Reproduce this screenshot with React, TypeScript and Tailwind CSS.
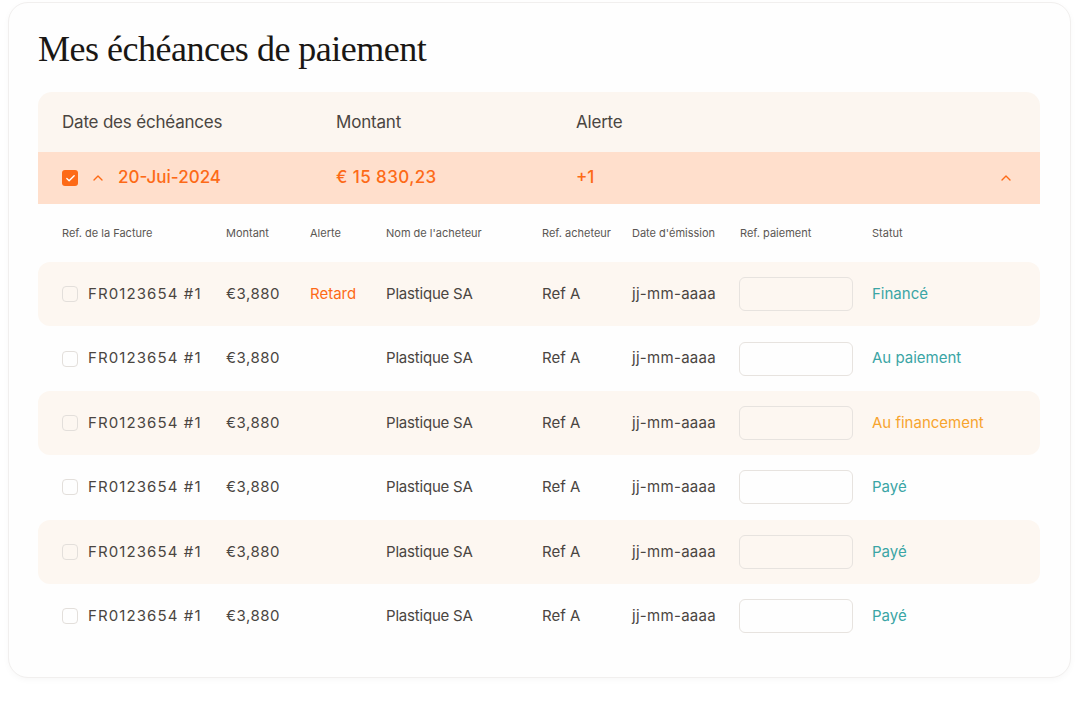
import { Check, ChevronUp } from "lucide-react";

type Row = {
  ref: string;
  amount: string;
  alert?: string;
  buyer: string;
  buyerRef: string;
  date: string;
  status: string;
  statusClass: string;
};

const ROWS: Row[] = [
  { ref: "FR0123654 #1", amount: "€3,880", alert: "Retard", buyer: "Plastique SA", buyerRef: "Ref A", date: "jj-mm-aaaa", status: "Financé", statusClass: "text-[#3aa5a5]" },
  { ref: "FR0123654 #1", amount: "€3,880", buyer: "Plastique SA", buyerRef: "Ref A", date: "jj-mm-aaaa", status: "Au paiement", statusClass: "text-[#3aa5a5]" },
  { ref: "FR0123654 #1", amount: "€3,880", buyer: "Plastique SA", buyerRef: "Ref A", date: "jj-mm-aaaa", status: "Au financement", statusClass: "text-[#f7a42e]" },
  { ref: "FR0123654 #1", amount: "€3,880", buyer: "Plastique SA", buyerRef: "Ref A", date: "jj-mm-aaaa", status: "Payé", statusClass: "text-[#3aa5a5]" },
  { ref: "FR0123654 #1", amount: "€3,880", buyer: "Plastique SA", buyerRef: "Ref A", date: "jj-mm-aaaa", status: "Payé", statusClass: "text-[#3aa5a5]" },
  { ref: "FR0123654 #1", amount: "€3,880", buyer: "Plastique SA", buyerRef: "Ref A", date: "jj-mm-aaaa", status: "Payé", statusClass: "text-[#3aa5a5]" },
];

const cols = "grid grid-cols-[164px_84px_76px_156px_90px_108px_132px_1fr] items-center pl-6";

export default function App() {
  return (
    <div className="w-full h-[701px] bg-white pt-[2px] pl-[8px] font-['Inter',sans-serif]">
      <div className="w-[1063px] h-[676px] rounded-[20px] border border-[#f1efee] bg-[#fefefe] shadow-[0_2px_6px_rgba(0,0,0,0.03)] px-[29px]">
        <h1 className="font-['Liberation_Serif',serif] text-[36px] tracking-[-0.5px] text-[#1a1714] pt-[24px] leading-[44px] h-[89px]">
          Mes échéances de paiement
        </h1>

        <div className="w-[1002px]">
          {/* group header */}
          <div className="h-[60px] bg-[#fcf6f0] rounded-t-[14px] flex items-center pl-6 pt-[2px] text-[17px] tracking-[-0.2px] text-[#4a4541]">
            <span className="w-[274px]">Date des échéances</span>
            <span className="w-[240px]">Montant</span>
            <span>Alerte</span>
          </div>

          {/* selected date */}
          <div className="h-[52px] bg-[#ffdfcc] flex items-center pl-6 pr-[26px] text-[17px] font-medium text-[#fd6a17]">
            <div className="w-[274px] flex items-center">
              <span className="w-4 h-4 rounded-[3px] bg-[#fd6a17] flex items-center justify-center">
                <Check size={11} strokeWidth={3} className="text-white" />
              </span>
              <ChevronUp size={16} strokeWidth={2} className="ml-[12px] mr-[12px]" />
              <span>20-Jui-2024</span>
            </div>
            <span className="w-[240px] tracking-[0.4px]">€ 15 830,23</span>
            <span className="flex-1">+1</span>
            <ChevronUp size={16} strokeWidth={2} />
          </div>

          {/* invoice header */}
          <div className={`${cols} h-[58px] text-[11px] text-[#5b5753]`}>
            <span>Ref. de la Facture</span>
            <span>Montant</span>
            <span>Alerte</span>
            <span>Nom de l'acheteur</span>
            <span>Ref. acheteur</span>
            <span>Date d'émission</span>
            <span>Ref. paiement</span>
            <span>Statut</span>
          </div>

          {ROWS.map((r, i) => {
            const shaded = i % 2 === 0;
            return (
              <div
                key={i}
                className={`${cols} h-[64.4px] text-[15px] text-[#4a4541] rounded-[12px] ${shaded ? "bg-[#fdf7f1]" : ""}`}
              >
                <div className="flex items-center">
                  <span className="w-4 h-4 rounded-[4px] border border-[#e3dfdb] bg-transparent mr-[10px]" />
                  <span className="tracking-[1.1px]">{r.ref}</span>
                </div>
                <span className="tracking-[0.5px]">{r.amount}</span>
                <span className="text-[#fd6a17]">{r.alert ?? ""}</span>
                <span className="tracking-[-0.2px]">{r.buyer}</span>
                <span>{r.buyerRef}</span>
                <span className="tracking-[0.3px]">{r.date}</span>
                <div className="w-[114px] h-[34px] rounded-[6px] border border-[#e7e3df] -ml-[1px]" />
                <span className={r.statusClass}>{r.status}</span>
              </div>
            );
          })}
        </div>
      </div>
    </div>
  );
}
